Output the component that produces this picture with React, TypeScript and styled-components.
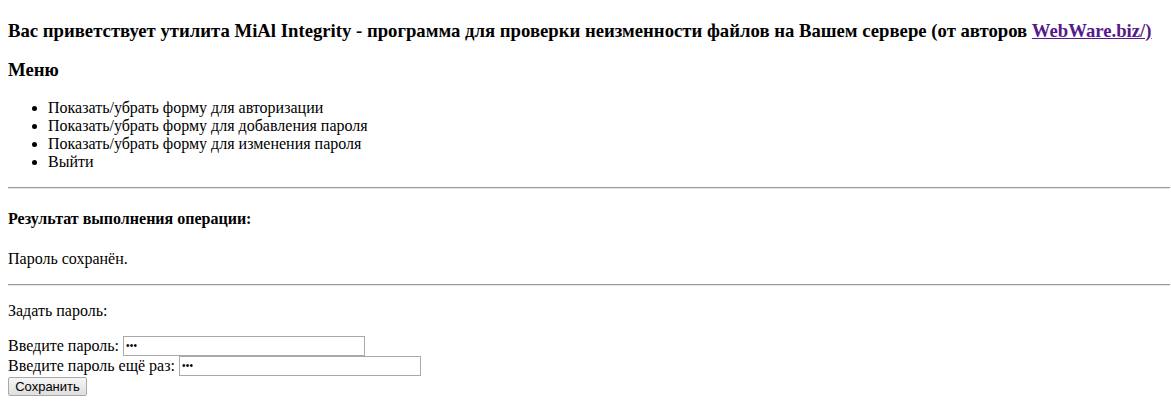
import React from "react";
import styled, { createGlobalStyle } from "styled-components";

const GlobalStyle = createGlobalStyle`
  html, body { background: #ffffff; }
  body {
    margin: 0 1px 8px 8px;
    padding-top: 1px;
    font-family: "Liberation Serif", "Times New Roman", serif;
    font-size: 16px;
    line-height: 18px;
    color: #000;
  }
`;

const Title = styled.h3`
  font-size: 18.72px;
  line-height: 21px;
  font-weight: bold;
  margin: 18.72px 0;
  white-space: nowrap;
`;

const Link = styled.a`
  color: #551a8b;
  text-decoration: underline;
`;

const MenuList = styled.ul`
  margin: 16px 0;
  padding-left: 40px;
  list-style: disc;
`;

const MenuItem = styled.li`
  line-height: 18px;
`;

const Divider = styled.hr`
  margin: 8px 0;
  border: none;
  border-top: 1px solid #9a9a9a;
  border-bottom: 1px solid #e6e6e6;
  height: 0;
`;

const ResultTitle = styled.h4`
  font-size: 16px;
  line-height: 18px;
  font-weight: bold;
  margin: 21.28px 0;
`;

const Paragraph = styled.p`
  margin: 16px 0;
  line-height: 18px;
`;

const Form = styled.form`
  display: flex;
  flex-direction: column;
  align-items: flex-start;
`;

const FieldRow = styled.label`
  display: flex;
  align-items: center;
  gap: 4px;
  height: 20px;
`;

const PasswordInput = styled.input`
  box-sizing: border-box;
  width: 242px;
  height: 20px;
  padding: 0 2px;
  border: 1px solid #a9a9a9;
  font-family: "Liberation Sans", Arial, sans-serif;
  font-size: 10px;
  letter-spacing: 0.3px;
  color: #000;
  background: #fff;
  outline: none;
`;

const SaveButton = styled.button`
  box-sizing: border-box;
  width: 79px;
  height: 19px;
  margin-top: 1px;
  padding: 0 6px;
  font-family: "Liberation Sans", Arial, sans-serif;
  font-size: 13px;
  line-height: 15px;
  color: #000;
  border: 1px solid #a8a8a8;
  border-radius: 2px;
  background: linear-gradient(#f6f6f6, #dedede);
`;

export default function App() {
  return (
    <>
      <GlobalStyle />
      <Title>
        Вас приветствует утилита MiAl Integrity - программа для проверки неизменности файлов на Вашем сервере (от авторов{" "}
        <Link href="#">WebWare.biz/)</Link>
      </Title>
      <Title>Меню</Title>
      <MenuList>
        <MenuItem>Показать/убрать форму для авторизации</MenuItem>
        <MenuItem>Показать/убрать форму для добавления пароля</MenuItem>
        <MenuItem>Показать/убрать форму для изменения пароля</MenuItem>
        <MenuItem>Выйти</MenuItem>
      </MenuList>
      <Divider />
      <ResultTitle>Результат выполнения операции:</ResultTitle>
      <Paragraph>Пароль сохранён.</Paragraph>
      <Divider />
      <Paragraph>Задать пароль:</Paragraph>
      <Form onSubmit={(e) => e.preventDefault()}>
        <FieldRow>
          Введите пароль: <PasswordInput type="text" defaultValue="•••" />
        </FieldRow>
        <FieldRow>
          Введите пароль ещё раз: <PasswordInput type="text" defaultValue="•••" />
        </FieldRow>
        <SaveButton type="submit">Сохранить</SaveButton>
      </Form>
    </>
  );
}
